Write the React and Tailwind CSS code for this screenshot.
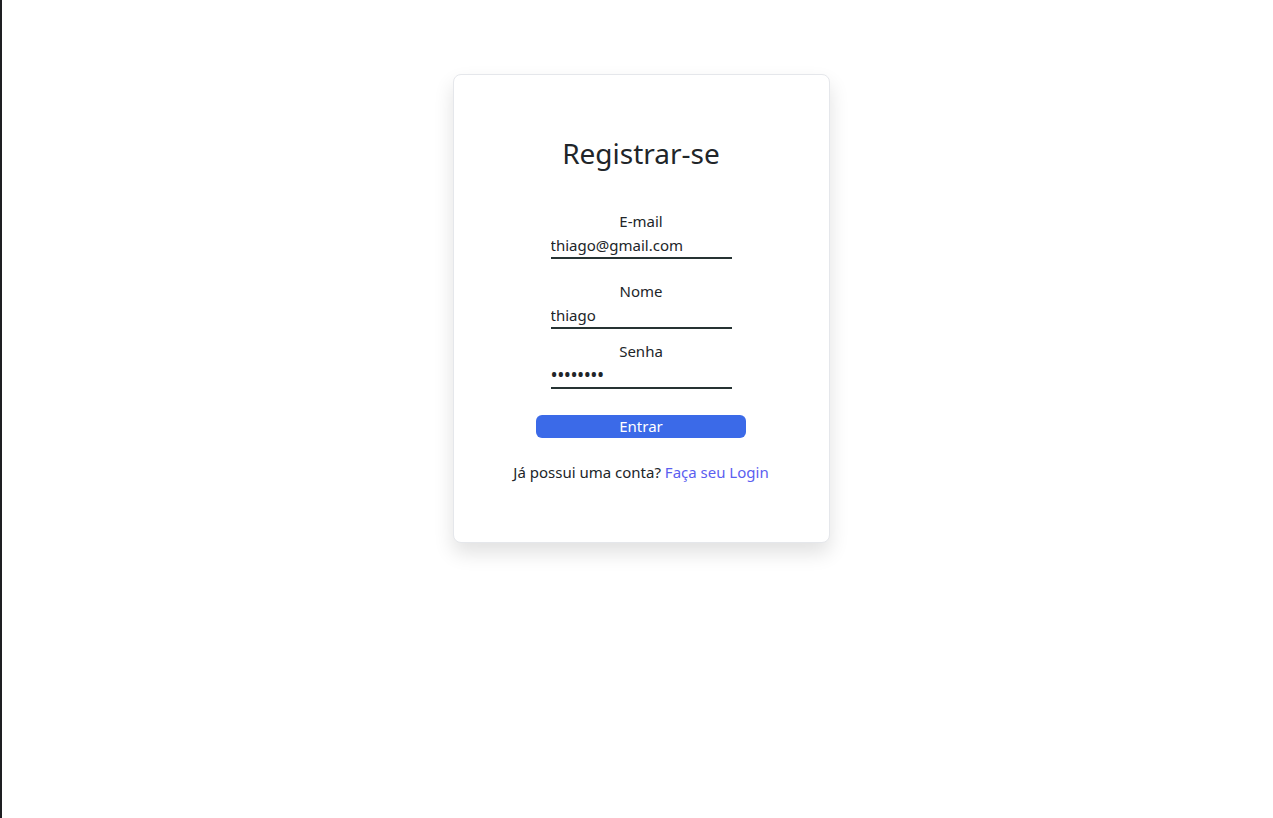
export default function App() {
  return (
    <div className="min-h-screen bg-white flex" style={{ fontFamily: '"Noto Sans", "Open Sans", sans-serif' }}>
      <div className="w-[2px] bg-[#1e1f22] shrink-0" />
      <div className="flex-1 flex justify-center items-start pt-[74px] pl-[7px]">
        <div className="w-[377px] bg-white border border-[#e5e7eb] rounded-lg shadow-[0_10px_20px_rgba(0,0,0,0.12)] pt-[59px] pb-[58px] flex flex-col items-center text-[#212529]">
          <h1 className="text-[28px] leading-[38px] font-normal">Registrar-se</h1>
          <form className="mt-[37px] flex flex-col items-center" onSubmit={(e) => e.preventDefault()}>
            <label className="flex flex-col items-center text-[15px] leading-[24px]">
              E-mail
              <input
                type="email"
                defaultValue="thiago@gmail.com"
                className="w-[181px] h-[26px] border-b-2 border-[#263333] outline-none text-[15px] text-[#212529] bg-transparent"
              />
            </label>
            <label className="mt-[20px] flex flex-col items-center text-[15px] leading-[24px]">
              Nome
              <input
                type="text"
                defaultValue="thiago"
                className="w-[181px] h-[26px] border-b-2 border-[#263333] outline-none text-[15px] text-[#212529] bg-transparent"
              />
            </label>
            <label className="mt-[10px] flex flex-col items-center text-[15px] leading-[24px]">
              Senha
              <input
                type="password"
                defaultValue="12345678"
                className="w-[181px] h-[26px] border-b-2 border-[#263333] outline-none text-[19px] text-[#212529] bg-transparent tracking-[-0.5px]"
              />
            </label>
            <button
              type="submit"
              className="mt-[26px] w-[210px] h-[23px] rounded-md bg-[#3b6ae8] text-white text-[15px] leading-[23px]"
            >
              Entrar
            </button>
          </form>
          <p className="mt-[22px] text-[15px] leading-[24px]">
            Já possui uma conta? <a href="#" className="text-[#5b5ef0]">Faça seu Login</a>
          </p>
        </div>
      </div>
    </div>
  );
}
